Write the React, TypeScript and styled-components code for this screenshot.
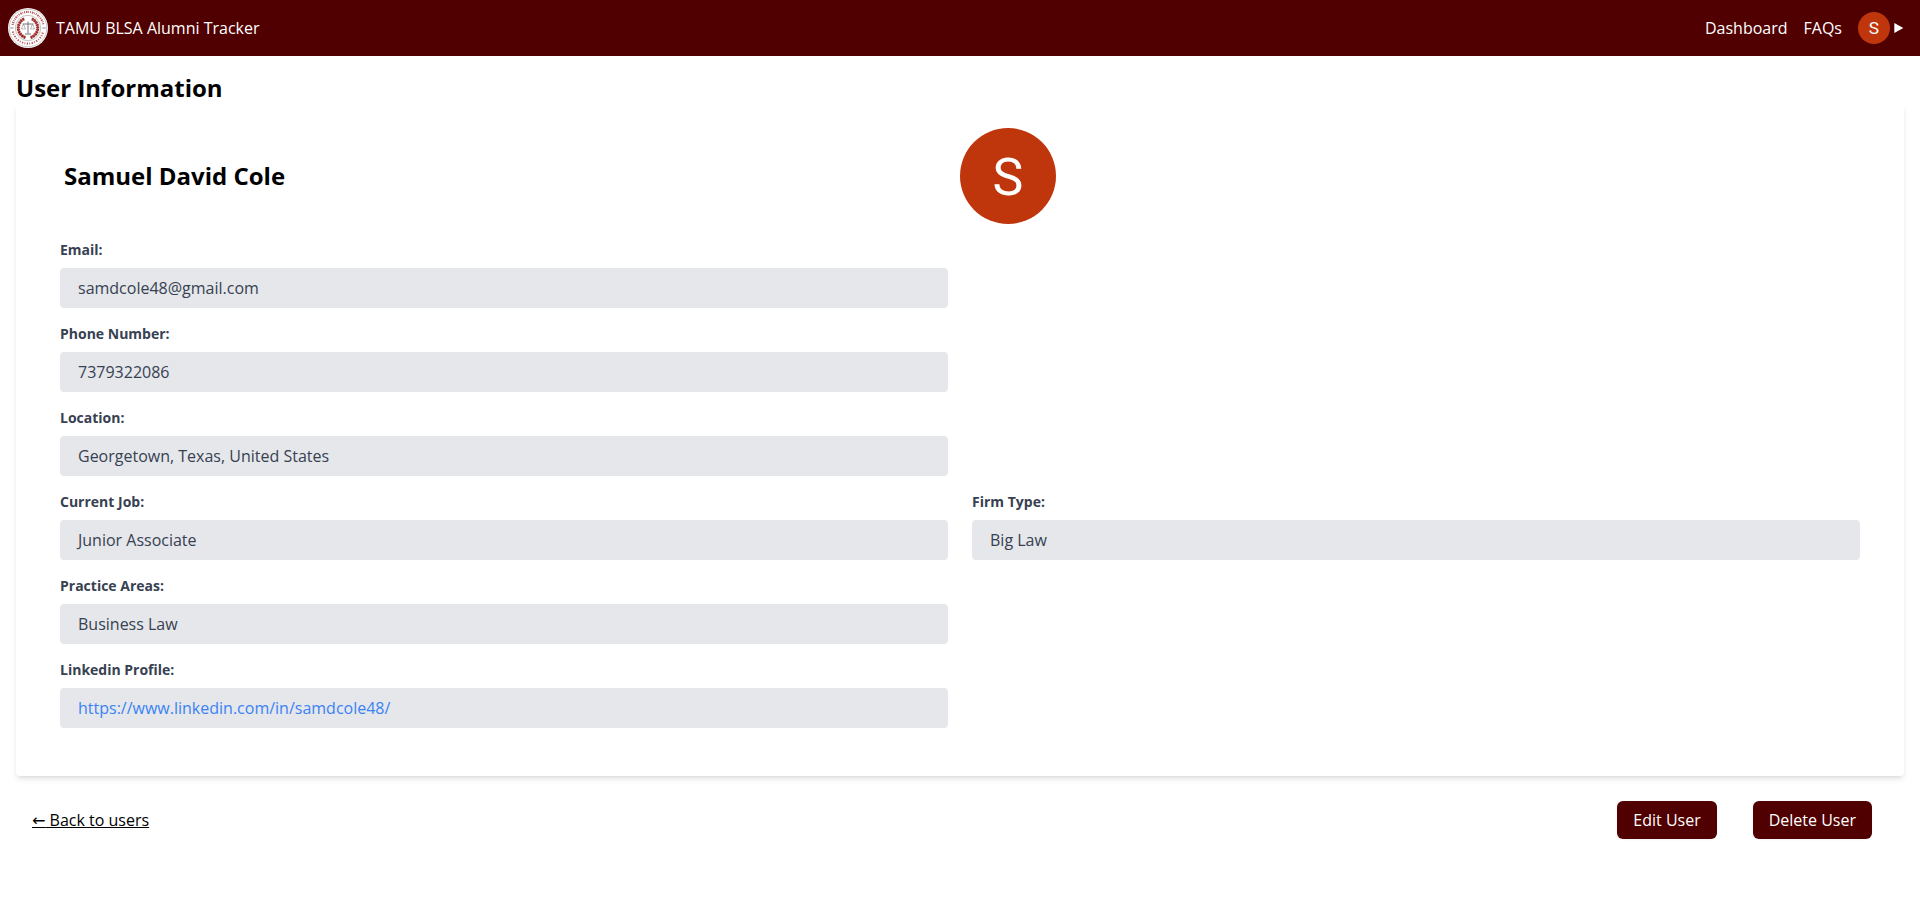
import React from 'react';
import styled, { createGlobalStyle } from 'styled-components';

const GlobalStyle = createGlobalStyle`
  *, *::before, *::after { box-sizing: border-box; }
  body {
    margin: 0;
    background: #fff;
    color: #000;
    font-family: 'Open Sans', 'Liberation Sans', sans-serif;
    font-size: 16px;
    line-height: 24px;
  }
  h1, h2, p { margin: 0; }
`;

const Navbar = styled.header`
  display: flex;
  align-items: center;
  justify-content: space-between;
  height: 56px;
  padding: 0 16px 0 8px;
  background: #500000;
  color: #fff;
  font-weight: 500;
`;

const Brand = styled.div`
  display: flex;
  align-items: center;
  gap: 8px;
`;

const NavLinks = styled.nav`
  display: flex;
  align-items: center;
  gap: 16px;
`;

const AccountMenu = styled.div`
  display: flex;
  align-items: center;
  gap: 4px;
`;

const Caret = styled.svg`
  display: block;
  width: 10px;
  height: 10px;
`;

const Seal = styled.svg`
  display: block;
  width: 40px;
  height: 40px;
`;

const Avatar = styled.div<{ $size: number }>`
  display: flex;
  align-items: center;
  justify-content: center;
  width: ${(p) => p.$size}px;
  height: ${(p) => p.$size}px;
  padding-top: ${(p) => Math.round(p.$size * 0.035)}px;
  border-radius: 50%;
  background: #bf360c;
  color: #fff;
  font-family: Roboto, sans-serif;
  font-size: ${(p) => p.$size * 0.54}px;
  font-weight: 400;
  line-height: 1;
`;

const Main = styled.main`
  padding: 16px;
`;

const PageTitle = styled.h1`
  font-size: 24px;
  line-height: 32px;
  font-weight: 700;
`;

const Card = styled.section`
  padding: 24px 32px 32px;
  background: #fff;
  border-radius: 4px;
  box-shadow: 0 4px 6px -1px rgba(0, 0, 0, 0.1), 0 2px 4px -2px rgba(0, 0, 0, 0.1);
`;

const Profile = styled.div`
  display: grid;
  grid-template-columns: 1fr 1fr;
  align-items: center;
  margin-bottom: 16px;
`;

const Name = styled.h2`
  padding-left: 16px;
  font-size: 24px;
  line-height: 32px;
  font-weight: 700;
`;

const FieldRow = styled.div`
  display: grid;
  grid-template-columns: 1fr 1fr;
  gap: 24px;
  padding: 0 12px;
  margin-bottom: 16px;
`;

const Label = styled.p`
  margin-bottom: 8px;
  color: #374151;
  font-size: 14px;
  line-height: 20px;
  font-weight: 700;
`;

const Value = styled.p`
  padding: 8px 16px;
  border: 2px solid #e5e7eb;
  border-radius: 4px;
  background: #e5e7eb;
  color: #374151;
  line-height: 20px;
`;

const ProfileLink = styled.a`
  color: #3b82f6;
  text-decoration: none;
`;

const Footer = styled.footer`
  display: flex;
  align-items: center;
  justify-content: space-between;
  padding: 25px 32px 0 16px;
`;

const BackLink = styled.a`
  color: #000;
  text-decoration: underline;
`;

const BackArrow = styled.span`
  font-family: 'DejaVu Sans', sans-serif;
  font-size: 16px;
  line-height: 1;
`;

const Actions = styled.div`
  display: flex;
  gap: 36px;
`;

const Button = styled.button`
  height: 38px;
  padding: 0 16px;
  border: 0;
  border-radius: 6px;
  background: #500000;
  color: #fff;
  font: inherit;
  font-weight: 500;
  box-shadow: 0 1px 2px rgba(0, 0, 0, 0.05);
`;

interface Field {
  label: string;
  value: string;
  link?: boolean;
}

const rows: Field[][] = [
  [{ label: 'Email:', value: 'samdcole48@gmail.com' }],
  [{ label: 'Phone Number:', value: '7379322086' }],
  [{ label: 'Location:', value: 'Georgetown, Texas, United States' }],
  [
    { label: 'Current Job:', value: 'Junior Associate' },
    { label: 'Firm Type:', value: 'Big Law' },
  ],
  [{ label: 'Practice Areas:', value: 'Business Law' }],
  [{ label: 'Linkedin Profile:', value: 'https://www.linkedin.com/in/samdcole48/', link: true }],
];

function SealLogo() {
  return (
    <Seal viewBox="0 0 40 40" fill="none">
      <circle cx="20" cy="20" r="20" fill="#fff" />
      <circle cx="20" cy="20" r="18.8" stroke="#b5afaf" strokeWidth="0.7" />
      <circle cx="20" cy="20" r="12.7" stroke="#aaa5a5" strokeWidth="0.7" />
      <path d="M4.6 17a15.6 15.6 0 0 1 30.8 0" stroke="#b85b5b" strokeWidth="2.1" strokeDasharray="1 .9 1.5 .8 .7 1.1" />
      <path d="M4.8 23.5a15.6 15.6 0 0 0 30.4 0" stroke="#b85b5b" strokeWidth="2.1" strokeDasharray="1.3 1.3 .8 1.5" />
      <path d="M2.3 20h3.2M34.5 20h3.2" stroke="#8d8d95" strokeWidth="1" />
      <path d="M16.2 10.8a10 10 0 0 0 1.2 18.7M23.8 10.8a10 10 0 0 1-1.2 18.7" stroke="#a02c2c" strokeWidth="3.1" strokeDasharray="1.9 .55" />
      <path d="M16.2 10.8a10 10 0 0 0 1.2 18.7M23.8 10.8a10 10 0 0 1-1.2 18.7" stroke="#a02c2c" strokeWidth="0.8" />
      <path d="M20 13.5v12M14.5 16h11M17 26h6" stroke="#68646b" strokeWidth="0.9" />
      <path d="m15.5 16-2 5h4l-2-5M24.5 16l-2 5h4l-2-5" stroke="#8b878d" strokeWidth="0.6" />
    </Seal>
  );
}

export default function App() {
  return (
    <>
      <GlobalStyle />
      <Navbar>
        <Brand>
          <SealLogo />
          <span>TAMU BLSA Alumni Tracker</span>
        </Brand>
        <NavLinks>
          <span>Dashboard</span>
          <span>FAQs</span>
          <AccountMenu>
            <Avatar $size={32}>S</Avatar>
            <Caret viewBox="0 0 10 10">
              <path d="M0.3 0 9.3 5 0.3 10z" fill="#fff" />
            </Caret>
          </AccountMenu>
        </NavLinks>
      </Navbar>
      <Main>
        <PageTitle>User Information</PageTitle>
        <Card>
          <Profile>
            <Name>Samuel David Cole</Name>
            <Avatar $size={96}>S</Avatar>
          </Profile>
          {rows.map((fields) => (
            <FieldRow key={fields[0].label}>
              {fields.map((field) => (
                <div key={field.label}>
                  <Label>{field.label}</Label>
                  <Value>
                    {field.link ? <ProfileLink href={field.value}>{field.value}</ProfileLink> : field.value}
                  </Value>
                </div>
              ))}
            </FieldRow>
          ))}
        </Card>
        <Footer>
          <BackLink href="#">
            <BackArrow>←</BackArrow> Back to users
          </BackLink>
          <Actions>
            <Button>Edit User</Button>
            <Button>Delete User</Button>
          </Actions>
        </Footer>
      </Main>
    </>
  );
}
